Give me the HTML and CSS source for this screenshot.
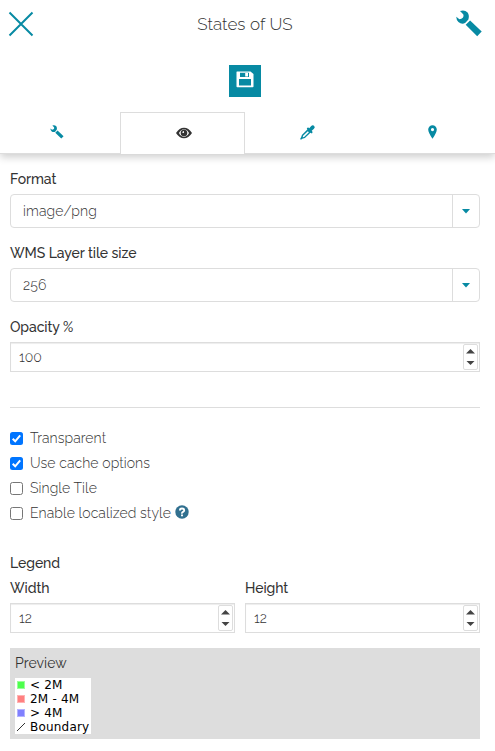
FILE: index.html
```html
<!DOCTYPE html>
<html lang="en">
<head>
<meta charset="utf-8">
<title>States of US</title>
<link rel="stylesheet" href="styles.css">
</head>
<body>
<svg class="defs" aria-hidden="true">
  <symbol id="wrench" viewBox="0 0 26 27">
    <path d="M4 1Q8.500-.8 11.600 2.600Q13.600 5.400 12.400 9.400L9.400 12.800Q5.800 14.800 2.400 12Q.2 9.800.3 6.800L3.400 9.200Q5.600 9.200 6.800 7.800Q8 6 7.200 4.200Z"/>
    <path d="M9.700 14.800 14.100 10.400 25.700 21.600 21.200 26.200Z"/>
  </symbol>
</svg>
<main class="panel">
  <header class="header">
    <svg class="close" viewBox="0 0 26 26"><path d="M1.500 1.500 24.500 24.500M24.500 1.500 1.500 24.500"/></svg>
    <h1>States of US</h1>
    <svg class="tool"><use href="#wrench"/></svg>
  </header>
  <div class="toolbar">
    <button class="save" aria-label="Save">
      <svg viewBox="0 0 18 17"><path fill-rule="evenodd" d="M1 .5H14.500L17.500 3V15.500Q17.500 16.300 16.700 16.300H1.300Q.5 16.300.5 15.500V1Q.5.5 1 .5ZM4 1.700V5.900H13V1.700ZM3 8V14.500H15V8Z"/><path d="M9.200 2H12V5.500H9.200Z"/></svg>
    </button>
  </div>
  <nav class="tabs">
    <a class="tab"><svg class="i-wrench"><use href="#wrench"/></svg></a>
    <a class="tab active"><svg class="i-eye" viewBox="0 0 16 12"><path fill-rule="evenodd" d="M0 6Q3.400.7 8 .7T16 6Q12.600 11.300 8 11.300T0 6ZM3 6Q4.800 9.800 8 9.800T13 6Q11.600 3.200 9.500 2.600H6.500Q4.400 3.200 3 6Z"/><circle cx="8" cy="6" r="3.300"/><path class="glint" d="M6.200 5.800Q6.300 4.200 8 4.100L8 6Z"/></svg></a>
    <a class="tab"><svg class="i-drop" viewBox="0 0 15 15"><path fill-rule="evenodd" d="M6.800 3 8.300 2.400 9.300 3.200 11 1.200Q12.800-.5 14.200.9T13.700 4L11.700 5.700 12.600 7 12 8.500 10.400 7.800 4.900 13.100 2.300 13.800 1 14.800.1 14 1.100 12.300 1.900 10 7.300 4.600ZM7.800 6.200 3.100 10.800 2.700 12.300 4.100 11.900 8.900 7.200Z"/></svg></a>
    <a class="tab"><svg class="i-pin" viewBox="0 0 9 14"><path fill-rule="evenodd" d="M4.500.2A4.300 4.300 0 0 1 8.800 4.500Q8.800 7.500 4.500 13.800.2 7.500.2 4.500A4.300 4.300 0 0 1 4.500.2ZM4.500 3A1.600 1.600 0 1 0 4.500 6.200 1.600 1.600 0 1 0 4.500 3Z"/></svg></a>
  </nav>
  <form class="form">
    <label class="label">Format</label>
    <div class="select"><span>image/png</span><i class="arrow"></i></div>
    <label class="label">WMS Layer tile size</label>
    <div class="select"><span>256</span><i class="arrow"></i></div>
    <label class="label">Opacity %</label>
    <div class="number"><span>100</span><div class="spin"><i class="up"></i><i class="down"></i></div></div>
    <hr>
    <div class="checks">
      <label class="check"><svg class="box on" viewBox="0 0 13 13"><path d="M2.700 6.800 5.200 9.300 10.200 3.400"/></svg>Transparent</label>
      <label class="check"><svg class="box on" viewBox="0 0 13 13"><path d="M2.700 6.800 5.200 9.300 10.200 3.400"/></svg>Use cache options</label>
      <label class="check"><span class="box"></span>Single Tile</label>
      <label class="check"><span class="box"></span>Enable localized style
        <svg class="help" viewBox="0 0 14 14"><circle cx="7" cy="7" r="6.700"/><path d="M4.900 5.400Q4.900 3.500 7 3.500T9.200 5.300Q9.200 6.300 8 6.900T7 8.700M7 9.500V11.300"/></svg></label>
    </div>
    <div class="label legend">Legend</div>
    <div class="cols">
      <div><label class="label">Width</label><div class="number"><span>12</span><div class="spin"><i class="up"></i><i class="down"></i></div></div></div>
      <div><label class="label">Height</label><div class="number"><span>12</span><div class="spin"><i class="up"></i><i class="down"></i></div></div></div>
    </div>
    <section class="preview">
      <div class="label">Preview</div>
      <ul class="key">
        <li><i class="sw green"></i>&lt; 2M</li>
        <li><i class="sw red"></i>2M - 4M</li>
        <li><i class="sw blue"></i>&gt; 4M</li>
        <li><svg class="line" viewBox="0 0 10 10"><path d="M1 9 9 1"/></svg>Boundary</li>
      </ul>
    </section>
  </form>
</main>
</body>
</html>
```
FILE: styles.css
```css
* { box-sizing: border-box; }
body { margin: 0; background: #fff; color: #333; font: 300 14px/20px Raleway, Lato, "Open Sans", sans-serif; }
.defs { display: none; }
.panel { width: 495px; height: 751px; overflow: hidden; }
svg { display: block; fill: #078aa3; overflow: visible; }

.header { display: flex; justify-content: space-between; align-items: center; height: 49px; padding: 0 13px 2px 8px; }
.header h1 { margin: 0; font-weight: 300; font-size: 17px; line-height: 24px; letter-spacing: .05px; }
.close { width: 26px; height: 26px; stroke: #078aa3; stroke-width: 2; }
.tool { width: 26px; height: 27px; }

.toolbar { display: flex; justify-content: center; height: 63px; padding-top: 16px; padding-right: 5px; }
.save { display: flex; justify-content: center; align-items: center; width: 32px; height: 32px; padding: 0 1px 3px 1px; border: 0; background: #078aa3; }
.save svg { width: 18px; height: 17px; fill: #fff; }

.tabs { display: grid; grid-template-columns: 120px 125px 125px 125px; height: 42px; border-bottom: 1px solid #ddd; box-shadow: 0 3px 8px rgba(0, 0, 0, .2); clip-path: inset(0 0 -20px 0); }
.tab { display: flex; justify-content: center; align-items: center; height: 42px; padding-bottom: 2px; }
.tab:first-child { padding-right: 6px; }
.tab.active { border: 1px solid #ddd; border-bottom: 0; background: #fff; padding-left: 2px; }
.i-wrench { width: 14px; height: 14px; }
.i-eye { width: 16px; height: 12px; fill: #333; }
.i-eye .glint { fill: #fff; }
.i-drop { width: 15px; height: 15px; }
.i-pin { width: 9px; height: 14px; }

.form { padding: 15px 15px 0 10px; }
.label { display: block; font-weight: 500; line-height: 20px; margin-bottom: 5px; color: #333; letter-spacing: -.07px; }
.select { display: flex; justify-content: space-between; height: 34px; margin-bottom: 15px; border: 1px solid #ddd; border-radius: 4px; padding-left: 12px; line-height: 32px; letter-spacing: .1px; }
.arrow { display: flex; width: 27px; border-left: 1px solid #ddd; align-items: center; justify-content: center; }
.arrow::after { content: ""; width: 9px; height: 5px; background: #078aa3; clip-path: polygon(0 0, 100% 0, 50% 100%); }
.number { display: flex; justify-content: space-between; align-items: center; height: 30px; padding: 0 1px 0 8px; border: 1px solid #ddd; box-shadow: inset 0 1px 1px rgba(0, 0, 0, .075); font-size: 14px; }
.spin { display: flex; flex-direction: column; align-items: center; justify-content: space-between; width: 15px; height: 26px; padding: 4px 0; border: 1px solid #ddd; border-radius: 2px; }
.up, .down { width: 9px; height: 4.500px; background: #444; clip-path: polygon(0 100%, 100% 100%, 50% 0); }
.down { clip-path: polygon(0 0, 100% 0, 50% 100%); }
hr { height: 1px; margin: 35px 0 20px; border: 0; background: #ddd; }
.check { display: flex; align-items: center; height: 20px; margin-bottom: 5px; letter-spacing: .08px; }
.box { width: 13px; height: 13px; margin-right: 7px; border: 1px solid #767676; border-radius: 2.500px; }
.box.on { border: 0; background: #0075ff; fill: none; stroke: #fff; stroke-width: 2; }
.help { width: 14px; height: 14px; margin: 0 0 2px 4px; fill: #31708f; }
.help path { fill: none; stroke: #fff; stroke-width: 1.900; }
.legend { margin-top: 30px; }
.cols { display: grid; grid-template-columns: 225px 235px; gap: 10px; }
.preview { height: 91px; margin-top: 15px; padding: 5px; background: #ddd; }
.preview .label { font-weight: 400; letter-spacing: .05px; }
.key { width: 76px; height: 56px; margin: 0; padding: 0; list-style: none; background: #fff; color: #000; font: 12px/14px "DejaVu Sans", sans-serif; letter-spacing: .2px; }
.key li { display: flex; align-items: center; height: 14px; white-space: nowrap; }
.sw { width: 8px; height: 8px; margin: 0 5px 0 2px; border: 1px solid; }
.green { background: #4dff4d; border-color: #99ff99; }
.red { background: #ff8080; border-color: #ffb3b3; }
.blue { background: #8080ff; border-color: #b3b3ff; }
.line { width: 10px; height: 10px; margin: 0 4px 0 1px; stroke: #333; stroke-width: 1; }
```
